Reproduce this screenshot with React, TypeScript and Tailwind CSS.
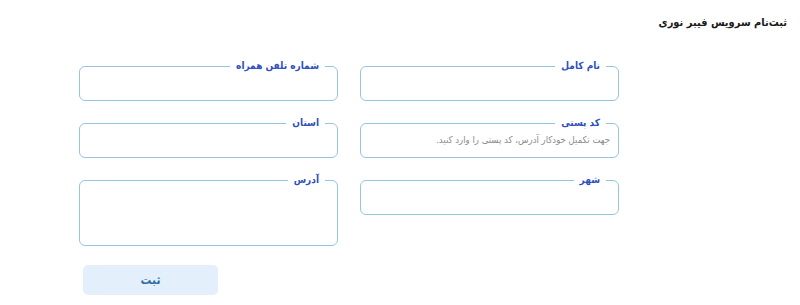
import React from 'react';

type FieldProps = {
  label: string;
  hint?: string;
  tall?: boolean;
};

function Field({ label, hint, tall }: FieldProps) {
  return (
    <div
      className={`relative rounded-[6px] border border-[#95c6e0] bg-white ${tall ? 'h-[66px]' : 'h-[35px]'}`}
    >
      <span className="absolute -top-[8px] right-[12px] bg-white px-[6px] text-[10px] font-bold leading-[14px] text-[#2f4fbf]">
        {label}
      </span>
      {hint && (
        <p className="pr-[8px] pt-[9px] text-[9.5px] leading-[14px] text-[#8c8c8c]">{hint}</p>
      )}
    </div>
  );
}

export default function App() {
  return (
    <div
      dir="rtl"
      className="h-[305px] w-[800px] bg-white"
      style={{ fontFamily: '"DejaVu Sans Condensed", "DejaVu Sans", sans-serif' }}
    >
      <h1 className="pr-[13px] pt-[15px] text-[11px] font-bold leading-[16px] text-[#1a1a1a]">
        ثبت‌نام سرویس فیبر نوری
      </h1>

      <div className="mr-[181px] mt-[35px] w-[540px]">
        <div className="grid grid-cols-2 items-start gap-x-[22px] gap-y-[22px]">
          <Field label="نام کامل" />
          <Field label="شماره تلفن همراه" />
          <Field label="کد پستی" hint="جهت تکمیل خودکار آدرس، کد پستی را وارد کنید." />
          <Field label="استان" />
          <Field label="شهر" />
          <Field label="آدرس" tall />
        </div>

        <div className="mt-[19px] flex justify-end pl-[4px]">
          <button
            type="button"
            className="h-[30px] w-[135px] rounded-[5px] bg-[#e3f0fb] text-[12px] font-bold text-[#2b6aa6]"
          >
            ثبت
          </button>
        </div>
      </div>
    </div>
  );
}
